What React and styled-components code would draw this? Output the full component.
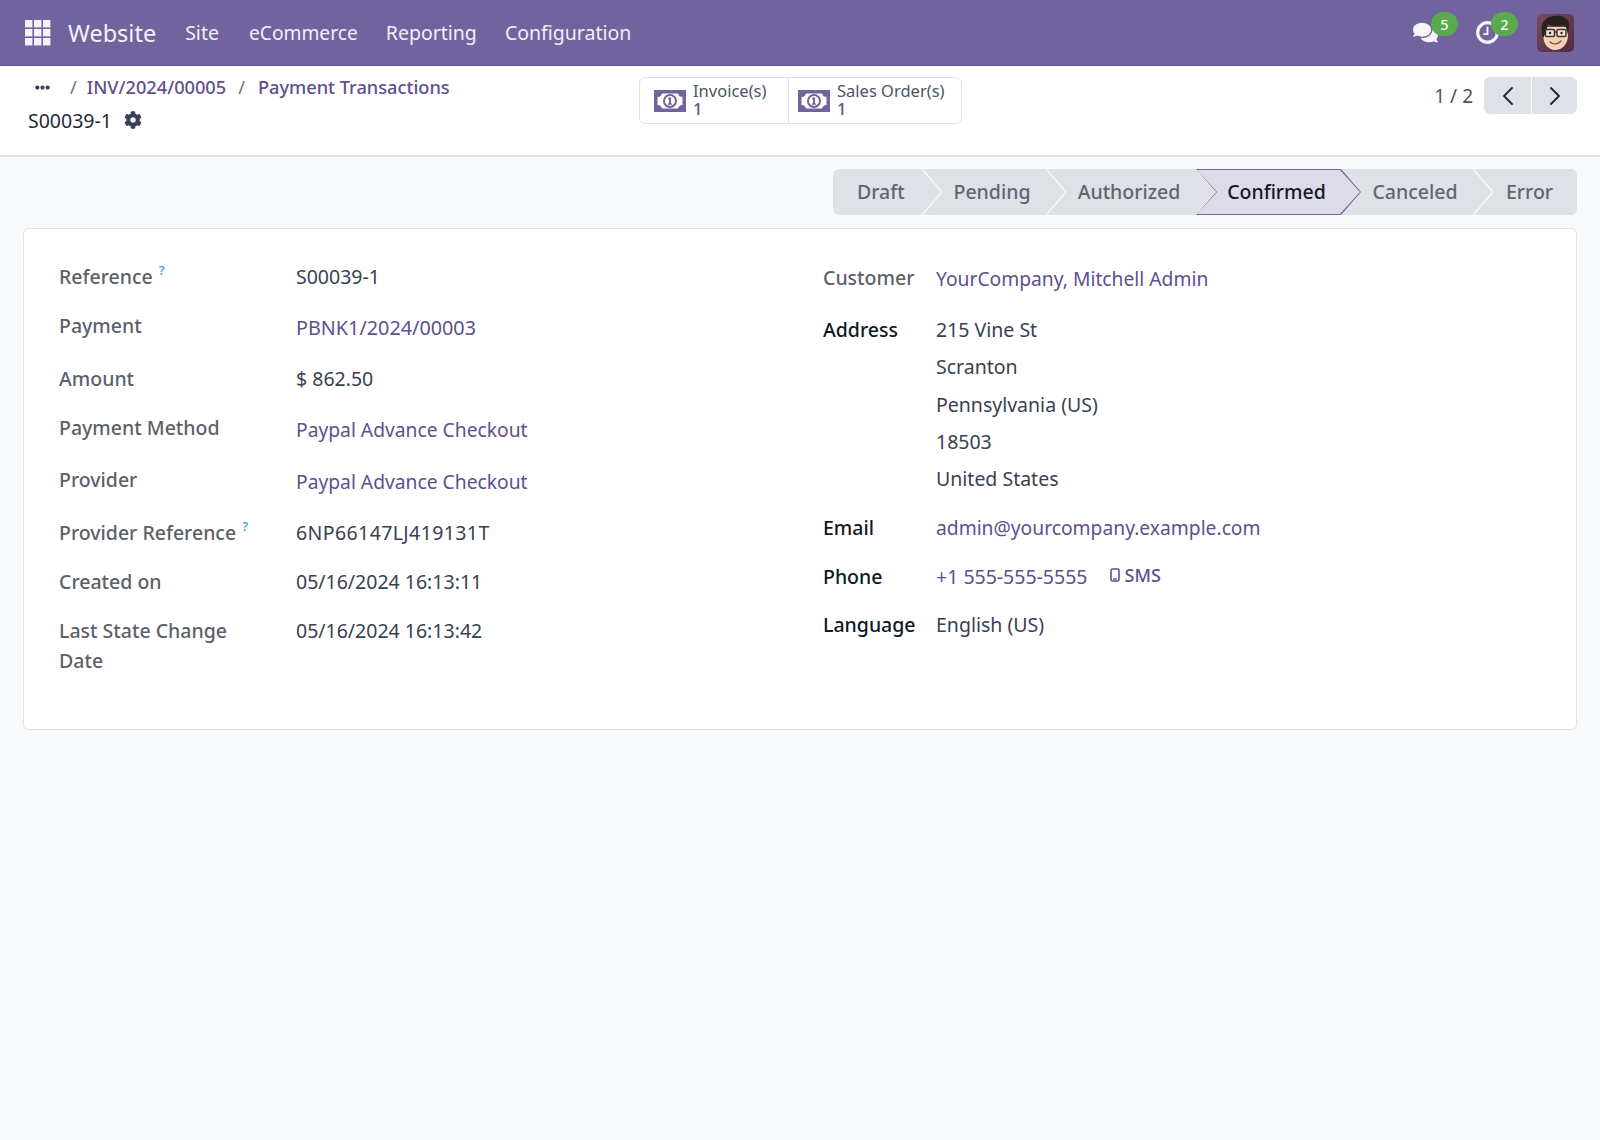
import React from "react";
import styled, { createGlobalStyle } from "styled-components";
import { FaCog, FaComments, FaEllipsisH } from "react-icons/fa";
import { ChevronLeft, ChevronRight } from "lucide-react";

const GlobalStyle = createGlobalStyle`
  html, body { margin: 0; padding: 0; background: #f9fafb; }
  body { font-family: "Noto Sans", "Open Sans", sans-serif; color: #374151; }
  * { box-sizing: border-box; }
`;

const Page = styled.div`
  min-height: 1140px;
  background: #f9fafb;
`;

/* top navbar */
const Navbar = styled.header`
  height: 66px;
  background: #71639e;
  border-bottom: 1px solid #5c4f87;
  display: flex;
  align-items: center;
  padding: 0 26px 0 25px;
  color: #fff;
`;
const AppsIcon = styled.svg`
  width: 26px;
  height: 26px;
  margin-right: 17px;
`;
const Brand = styled.span`
  font-size: 23.5px;
  color: #f4f2f8;
  margin-right: 29px;
`;
const NavItem = styled.span`
  font-size: ${(p) => p.$size || 19.5}px;
  color: #f1eff6;
  margin-right: ${(p) => p.$gap || 28}px;
`;
const NavRight = styled.div`
  margin-left: auto;
  display: flex;
  align-items: center;
`;
const Systray = styled.div`
  position: relative;
  width: 26px;
  height: 24px;
  margin-right: ${(p) => p.$gap}px;
  display: flex;
  align-items: center;
  font-size: 25px;
  color: #f6f5fa;
`;
const Badge = styled.span`
  position: absolute;
  left: ${(p) => p.$left}px;
  top: -9px;
  width: 27px;
  height: 24px;
  border-radius: 12px;
  background: #5aa94f;
  color: #f1f7ef;
  font-size: 14.5px;
  font-weight: 500;
  display: flex;
  align-items: center;
  justify-content: center;
`;

/* control panel */
const ControlPanel = styled.div`
  height: 91px;
  background: #fff;
  border-bottom: 2px solid #e2e5e9;
  display: flex;
  align-items: flex-start;
  padding: 9px 23px 0 28px;
`;
const Crumbs = styled.div`
  width: 611px;
`;
const CrumbRow = styled.div`
  display: flex;
  align-items: center;
  height: 24px;
  padding-left: 7px;
  font-size: 18.2px;
  font-weight: 500;
  color: #5e4f90;
`;
const Dots = styled.span`
  display: flex;
  font-size: 15px;
  color: #374151;
  width: 35px;
`;
const Slash = styled.span`
  color: #6b7280;
  font-weight: 400;
  margin-left: ${(p) => p.$left || 0}px;
  margin-right: ${(p) => p.$right}px;
`;
const RecordRow = styled.div`
  display: flex;
  align-items: center;
  height: 30px;
  margin-top: 6px;
  font-size: 19.5px;
  color: #1f2937;
  svg {
    margin-left: 12px;
    font-size: 18px;
    color: #374151;
  }
`;
const StatButtons = styled.div`
  display: flex;
  height: 47px;
  margin-top: 2px;
  background: #fff;
  border: 1px solid #dfe2e7;
  border-radius: 6px;
`;
const StatButton = styled.div`
  width: ${(p) => p.$w}px;
  display: flex;
  align-items: center;
  padding-left: 14px;
  & + & {
    border-left: 1px solid #dfe2e7;
    padding-left: 9px;
  }
`;
const MoneyIcon = styled.svg`
  width: 32px;
  height: 22px;
  margin-right: 7px;
  flex: none;
`;
const StatText = styled.div`
  font-size: 16.5px;
  line-height: 18px;
  color: #4b5563;
  padding-bottom: 2px;
  strong {
    display: block;
    font-weight: 500;
    color: #5e4f90;
  }
`;
const Pager = styled.div`
  margin-left: auto;
  margin-top: 2px;
  display: flex;
  align-items: center;
`;
const PagerText = styled.span`
  font-size: 19px;
  color: #4b5563;
  margin-right: 11px;
`;
const PagerButton = styled.button`
  width: ${(p) => p.$w}px;
  height: 37px;
  border: 0;
  padding: 0;
  margin-left: ${(p) => p.$ml}px;
  background: #dee2e6;
  color: #1f2937;
  border-radius: ${(p) => p.$radius};
  display: flex;
  align-items: center;
  justify-content: center;
`;

/* status bar */
const StatusWrap = styled.div`
  display: flex;
  justify-content: flex-end;
  padding: 12px 23px 13px;
`;
const StatusBar = styled.div`
  display: flex;
  height: 46px;
  background: #dee2e6;
  border-radius: 6px;
`;
const Step = styled.div`
  position: relative;
  width: ${(p) => p.$w}px;
  display: flex;
  align-items: center;
  justify-content: ${(p) => (p.$first ? "flex-start" : "center")};
  padding-left: ${(p) => p.$pl}px;
  padding-bottom: 2px;
  font-size: 19.5px;
  font-weight: 500;
  color: ${(p) => (p.$active ? "#111827" : "#5f6670")};
  span {
    position: relative;
    z-index: 2;
  }
  ${(p) =>
    p.$active &&
    `
    &::before, &::after {
      content: "";
      position: absolute;
      z-index: 1;
      clip-path: polygon(0 0, calc(100% - 20px) 0, 100% 50%, calc(100% - 20px) 100%, 0 100%, 20px 50%);
    }
    &::before { inset: 0 -20px 0 0; background: #71639e; }
    &::after { inset: 1px -19px 1px 1px; background: #dedbe9; }
  `}
`;
const Chevron = styled.svg`
  position: absolute;
  left: 100%;
  top: 0;
  width: 20px;
  height: 46px;
  z-index: 1;
`;

/* form card */
const Card = styled.section`
  margin: 0 23px;
  height: 502px;
  background: #fff;
  border: 1px solid #dfe2e7;
  border-radius: 6px;
  padding: 33px 35px 0;
  display: grid;
  grid-template-columns: 764px 1fr;
`;
const Column = styled.div`
  font-size: 19.5px;
  line-height: 30px;
  padding-top: ${(p) => p.$top || 0}px;
`;
const Row = styled.div`
  display: grid;
  grid-template-columns: ${(p) => p.$label}px 1fr;
  height: ${(p) => p.$h}px;
`;
const Label = styled.div`
  font-weight: 500;
  padding-right: 30px;
  color: ${(p) => (p.$dark ? "#111827" : "#5b6169")};
`;
const RightLabel = styled(Label)`
  padding-right: 0;
`;
const Help = styled.sup`
  font-size: 13px;
  line-height: 0;
  color: #3f9dc4;
  margin-left: 6px;
  vertical-align: 9px;
`;
const Value = styled.div`
  color: #374151;
  padding-top: ${(p) => p.$top || 0}px;
  letter-spacing: ${(p) => p.$spacing || 0}px;
`;
const Link = styled.a`
  color: #5e4f90;
  text-decoration: none;
`;
const FieldLink = styled(Link)`
  font-size: ${(p) => p.$size || 19.25}px;
`;
const AddressLine = styled.div`
  height: 37.25px;
`;
const SmsLink = styled.span`
  display: inline-flex;
  align-items: center;
  margin-left: 23px;
  font-size: 18px;
  font-weight: 500;
  color: #5e4f90;
  position: relative;
  top: -2px;
  svg {
    margin-right: 4px;
  }
`;

const leftRows = [
  { label: "Reference", help: true, value: "S00039-1", h: 49 },
  { label: "Payment", value: "PBNK1/2024/00003", link: true, size: 19.8, top: 2, h: 53 },
  { label: "Amount", value: "$ 862.50", h: 49 },
  { label: "Payment Method", value: "Paypal Advance Checkout", link: true, top: 2, h: 52 },
  { label: "Provider", value: "Paypal Advance Checkout", link: true, top: 2, h: 53 },
  { label: "Provider Reference", help: true, value: "6NP66147LJ419131T", spacing: 0.4, h: 49 },
  { label: "Created on", value: "05/16/2024 16:13:11", h: 49 },
  { label: "Last State Change Date", value: "05/16/2024 16:13:42", h: 60 },
];

const steps = [
  { name: "Draft", w: 89, pl: 24, first: true },
  { name: "Pending", w: 124, pl: 16 },
  { name: "Authorized", w: 150, pl: 16 },
  { name: "Confirmed", w: 145, pl: 16, active: true },
  { name: "Canceled", w: 132, pl: 16 },
  { name: "Error", w: 104, pl: 9, last: true },
];

function Money() {
  return (
    <MoneyIcon viewBox="0 0 32 22">
      <path
        fill="#71639e"
        fillRule="evenodd"
        d="M0 0h32v22H0z M3.5 7v8q3.5 0 4.5 3.5h16q1-3.5 4.5-3.5V7q-3.5 0-4.5-3.5H8Q7 7 3.5 7z"
      />
      <circle cx="16" cy="11" r="6" fill="#fff" stroke="#71639e" strokeWidth="2" />
      <path fill="#71639e" d="M14.6 7.6h2.4v5.8h1.2v1.4h-4.4v-1.4h1.2V9.2h-1.1z" />
    </MoneyIcon>
  );
}

function ClockIcon() {
  return (
    <svg width="23" height="23" viewBox="0 0 22 22" fill="none" stroke="#f6f5fa">
      <circle cx="11" cy="11" r="9.4" strokeWidth="3" />
      <path d="M11 5.5v7H7" strokeWidth="1.8" />
    </svg>
  );
}

function Avatar() {
  return (
    <svg width="37" height="38" viewBox="0 0 37 38">
      <defs>
        <linearGradient id="avatar-bg" x1="0" y1="0" x2="1" y2="1">
          <stop offset="0" stopColor="#7a4a63" />
          <stop offset="1" stopColor="#4f2a42" />
        </linearGradient>
      </defs>
      <rect width="37" height="38" rx="5" fill="url(#avatar-bg)" />
      <path d="M6 20c0 11 6 16 12 16 7 0 13-6 13-15l-1-8H7z" fill="#f4d2b6" />
      <path d="M6.5 24C2 12 6 3 17 2c6-1 10 0 12 3 3 1 4 6 2 15-1-4-2-8-4-9-6 2-13 1-16-1-1 4-2 8-4.500 14z" fill="#24211f" />
      <rect x="8.500" y="15.500" width="9" height="7" rx="1" fill="#f7efe6" fillOpacity=".55" stroke="#3a3733" strokeWidth="1.5" />
      <rect x="20" y="15.500" width="9" height="7" rx="1" fill="#f7efe6" fillOpacity=".55" stroke="#3a3733" strokeWidth="1.5" />
      <path d="M17.500 18H20" stroke="#3a3733" strokeWidth="1.3" />
      <circle cx="13" cy="19" r="1.200" fill="#24211f" />
      <circle cx="24.500" cy="19" r="1.200" fill="#24211f" />
      <path d="M13 28c3 3 8 2.500 11-1" fill="none" stroke="#8a4b3a" strokeWidth="1.300" strokeLinecap="round" />
    </svg>
  );
}

export default function App() {
  return (
    <Page>
      <GlobalStyle />
      <Navbar>
        <AppsIcon viewBox="0 0 26 26" fill="#f4f2f8">
          {[0, 9, 18].map((y) =>
            [0, 9, 18].map((x) => <rect key={`${x}-${y}`} x={x} y={y} width="7.4" height="7.4" />)
          )}
        </AppsIcon>
        <Brand>Website</Brand>
        <NavItem $gap={30}>Site</NavItem>
        <NavItem $size={19.2}>eCommerce</NavItem>
        <NavItem>Reporting</NavItem>
        <NavItem>Configuration</NavItem>
        <NavRight>
          <Systray $gap={37}>
            <FaComments />
            <Badge $left={18}>5</Badge>
          </Systray>
          <Systray $gap={35}>
            <ClockIcon />
            <Badge $left={15}>2</Badge>
          </Systray>
          <Avatar />
        </NavRight>
      </Navbar>

      <ControlPanel>
        <Crumbs>
          <CrumbRow>
            <Dots>
              <FaEllipsisH />
            </Dots>
            <Slash $right={10}>/</Slash>
            <Link>INV/2024/00005</Link>
            <Slash $left={12} $right={13}>/</Slash>
            <Link>Payment Transactions</Link>
          </CrumbRow>
          <RecordRow>
            S00039-1
            <FaCog />
          </RecordRow>
        </Crumbs>
        <StatButtons>
          <StatButton $w={148}>
            <Money />
            <StatText>
              Invoice(s)
              <strong>1</strong>
            </StatText>
          </StatButton>
          <StatButton $w={173}>
            <Money />
            <StatText>
              Sales Order(s)
              <strong>1</strong>
            </StatText>
          </StatButton>
        </StatButtons>
        <Pager>
          <PagerText>1 / 2</PagerText>
          <PagerButton $w={47} $ml={0} $radius="6px 0 0 6px">
            <ChevronLeft size={32} strokeWidth={1.4} />
          </PagerButton>
          <PagerButton $w={45} $ml={1} $radius="0 6px 6px 0">
            <ChevronRight size={32} strokeWidth={1.4} />
          </PagerButton>
        </Pager>
      </ControlPanel>

      <StatusWrap>
        <StatusBar>
          {steps.map((s) => (
            <Step key={s.name} $w={s.w} $active={s.active} $first={s.first} $pl={s.pl}>
              <span>{s.name}</span>
              {!s.active && !s.last && (
                <Chevron viewBox="0 0 20 46">
                  <path d="M0 0l20 23L0 46" fill="none" stroke="#f9fafb" strokeWidth="1.2" />
                </Chevron>
              )}
            </Step>
          ))}
        </StatusBar>
      </StatusWrap>

      <Card>
        <Column>
          {leftRows.map((r) => (
            <Row key={r.label} $label={237} $h={r.h}>
              <Label>
                {r.label}
                {r.help && <Help>?</Help>}
              </Label>
              <Value $top={r.top} $spacing={r.spacing}>
                {r.link ? <FieldLink $size={r.size}>{r.value}</FieldLink> : r.value}
              </Value>
            </Row>
          ))}
        </Column>
        <Column $top={1}>
          <Row $label={113} $h={52}>
            <RightLabel>Customer</RightLabel>
            <Value $top={1}>
              <FieldLink>YourCompany, Mitchell Admin</FieldLink>
            </Value>
          </Row>
          <Row $label={113} $h={198}>
            <RightLabel $dark>Address</RightLabel>
            <Value>
              <AddressLine>215 Vine St</AddressLine>
              <AddressLine>Scranton</AddressLine>
              <AddressLine>Pennsylvania (US)</AddressLine>
              <AddressLine>18503</AddressLine>
              <AddressLine>United States</AddressLine>
            </Value>
          </Row>
          <Row $label={113} $h={49}>
            <RightLabel $dark>Email</RightLabel>
            <Value>
              <FieldLink>admin@yourcompany.example.com</FieldLink>
            </Value>
          </Row>
          <Row $label={113} $h={48}>
            <RightLabel $dark>Phone</RightLabel>
            <Value>
              <Link>+1 555-555-5555</Link>
              <SmsLink>
                <svg width="10" height="14" viewBox="0 0 10 14">
                  <rect x="1" y="1" width="8" height="12" rx="1.5" fill="none" stroke="#5e4f90" strokeWidth="1.6" />
                  <path d="M3 11h4" stroke="#5e4f90" strokeWidth="1.4" />
                </svg>
                SMS
              </SmsLink>
            </Value>
          </Row>
          <Row $label={113} $h={40}>
            <RightLabel $dark>Language</RightLabel>
            <Value>English (US)</Value>
          </Row>
        </Column>
      </Card>
    </Page>
  );
}
